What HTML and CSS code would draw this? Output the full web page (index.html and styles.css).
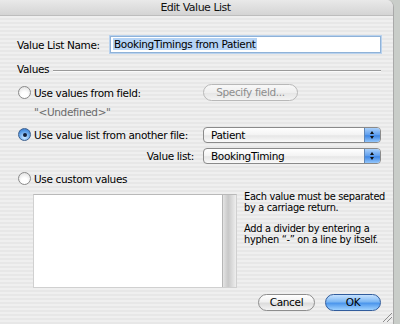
FILE: index.html
```html
<!DOCTYPE html>
<html>
	<head>
		<meta charset="UTF-8">
		<title>Edit Value List</title>
		<link rel="stylesheet" href="styles.css">
	</head>
	<body>
		<div class="window">
			<div class="titlebar">Edit Value List</div>
			<div class="content">
				<div class="row name-row">
					<span class="label">Value List Name:</span>
					<div class="textfield"><span class="sel">BookingTimings from Patient</span></div>
				</div>
				<div class="row group-head">
					<span>Values</span>
					<span class="rule"></span>
				</div>
				<div class="row opt-row first">
					<div class="radio-col">
						<span class="radio"></span>
						<span>Use values from field:</span>
					</div>
					<button class="pill disabled">Specify field...</button>
				</div>
				<div class="row undefined">"&lt;Undefined&gt;"</div>
				<div class="row opt-row second">
					<div class="radio-col">
						<span class="radio on"></span>
						<span>Use value list from another file:</span>
					</div>
					<div class="popup"><span class="pv">Patient</span><span class="arrows"></span></div>
				</div>
				<div class="row opt-row sub">
					<div class="radio-col right">Value list:</div>
					<div class="popup"><span class="pv">BookingTiming</span><span class="arrows"></span></div>
				</div>
				<div class="row opt-row third">
					<div class="radio-col">
						<span class="radio"></span>
						<span>Use custom values</span>
					</div>
				</div>
				<div class="row custom">
					<div class="textarea"><span class="track"></span></div>
					<div class="help">
						<p>Each value must be separated<br>by a carriage return.</p>
						<p>Add a divider by entering a<br>hyphen “-” on a line by itself.</p>
					</div>
				</div>
				<div class="row buttons">
					<button class="pill">Cancel</button>
					<button class="pill default">OK</button>
				</div>
			</div>
			<span class="grip"></span>
		</div>
	</body>
</html>
```

FILE: styles.css
```css
html,body{
	margin: 0;
	padding: 0;
}
body{
	width: 400px;
	height: 324px;
	overflow: hidden;
	background: #c9cdc9;
	font-family: "DejaVu Sans", "Liberation Sans", sans-serif;
	font-size: 10.5px;
	letter-spacing: -0.35px;
	color: #000;
}
p{
	margin: 0;
}
.window{
	position: relative;
	width: 394px;
	height: 330px;
	border-top-right-radius: 7px;
	overflow: hidden;
	background: repeating-linear-gradient(#efefef 0, #efefef 2px, #e7e7e7 2px, #e7e7e7 4px);
	border-right: 1px solid #a9a9a9;
	box-sizing: border-box;
}
.titlebar{
	height: 16px;
	line-height: 15px;
	text-align: center;
	font-size: 11px;
	letter-spacing: -0.5px;
	color: #111;
	background: linear-gradient(#e9e9e9, #d4d4d4);
	border-bottom: 1px solid #bdbdbd;
	box-sizing: border-box;
	padding-right: 2px;
}
.content{
	padding: 0 12px 0 17px;
}
.row{
	display: flex;
	align-items: center;
}
.name-row{
	margin-top: 20px;
	height: 17px;
}
.name-row .label{
	width: 93px;
}
.textfield{
	flex: 1;
	height: 17px;
	box-sizing: border-box;
	background: #fff;
	border: 1px solid #8fb2d8;
	box-shadow: 0 0 0 1px #b9d2ee;
	padding-left: 2px;
	line-height: 15px;
}
.sel{
	background: #b5d3f5;
	padding: 0 1px;
}
.group-head{
	margin-top: 9px;
	height: 14px;
}
.rule{
	flex: 1;
	height: 1px;
	background: #9a9a9a;
	margin: 4px 0 0 4px;
	border-bottom: 1px solid #fafafa;
}
.opt-row{
	height: 17px;
}
.first{
	margin-top: 8px;
}
.second{
	margin-top: 8px;
}
.sub{
	margin-top: 4px;
}
.third{
	margin-top: 7px;
	height: 15px;
}
.radio-col{
	width: 186px;
	display: flex;
	align-items: center;
	gap: 3px;
	white-space: nowrap;
}
.radio-col.right{
	justify-content: flex-end;
	padding-right: 9px;
	box-sizing: border-box;
}
.radio{
	width: 13px;
	height: 13px;
	border-radius: 50%;
	box-sizing: border-box;
	border: 1px solid #8a8a8a;
	background: radial-gradient(circle at 50% 70%, #ffffff 30%, #dadada 100%);
	margin-left: 1px;
	position: relative;
	flex: none;
}
.radio.on{
	border-color: #3b5f8e;
	background: radial-gradient(circle at 50% 75%, #bfe0ff 10%, #5a9de6 60%, #2f6fc4 100%);
}
.radio.on:after{
	content: "";
	position: absolute;
	left: 3.5px;
	top: 3.5px;
	width: 4px;
	height: 4px;
	border-radius: 50%;
	background: #13213a;
}
.undefined{
	margin-top: 5px;
	height: 12px;
	padding-left: 17px;
	color: #6b6b6b;
}
.pill{
	font-family: inherit;
	font-size: 10.5px;
	letter-spacing: -0.35px;
	height: 17px;
	padding: 0;
	border-radius: 9px;
	border: 1px solid #8d8d8d;
	background: linear-gradient(#ffffff, #f0f0f0 45%, #dcdcdc 55%, #f4f4f4);
	color: #000;
	line-height: 15px;
}
.pill.disabled{
	width: 95px;
	color: #8d8d8d;
	border-color: #b8b8b8;
	background: linear-gradient(#f8f8f8, #efefef 50%, #e6e6e6 55%, #f3f3f3);
}
.popup{
	flex: 1;
	height: 16px;
	box-sizing: border-box;
	border: 1px solid #8a8a8a;
	border-radius: 4px;
	background: linear-gradient(#ffffff, #f3f3f3 50%, #e6e6e6 55%, #fafafa);
	display: flex;
	overflow: hidden;
}
.pv{
	flex: 1;
	padding-left: 7px;
	line-height: 14px;
}
.arrows{
	width: 15px;
	position: relative;
	border-left: 1px solid #5f86b5;
	background: linear-gradient(#a9d0fb, #5d9ded 50%, #3d86e5 55%, #93c6fb);
}
.arrows:before,
.arrows:after{
	content: "";
	position: absolute;
	left: 5px;
	border-left: 2.5px solid transparent;
	border-right: 2.5px solid transparent;
}
.arrows:before{
	top: 3px;
	border-bottom: 3px solid #111;
}
.arrows:after{
	top: 8px;
	border-top: 3px solid #111;
}
.custom{
	margin-top: 8px;
	height: 94px;
	align-items: flex-start;
}
.textarea{
	margin-left: 16px;
	width: 204px;
	height: 94px;
	box-sizing: border-box;
	background: #fff;
	border: 1px solid #d0d0d0;
	border-top-color: #b9b9b9;
	display: flex;
	justify-content: flex-end;
	flex: none;
}
.track{
	width: 13px;
	background: linear-gradient(90deg, #e4e4e4, #c8c8c8 40%, #eeeeee);
	border-left: 1px solid #b6b6b6;
}
.help{
	margin-left: 7px;
	margin-top: -3px;
	font-size: 9.8px;
	letter-spacing: -0.3px;
	line-height: 11px;
	white-space: nowrap;
}
.help p{
	margin-bottom: 10px;
}
.buttons{
	margin-top: 6px;
	justify-content: flex-end;
	gap: 10px;
	height: 17px;
}
.buttons .pill{
	width: 57px;
}
.pill.default{
	width: 56px;
	border-color: #315c9c;
	background: linear-gradient(#c6e2ff, #7db7f3 45%, #4c96ec 55%, #9fd2ff);
}
.grip{
	position: absolute;
	right: 1px;
	bottom: 8px;
	width: 9px;
	height: 9px;
	background: linear-gradient(135deg, transparent 45%, #8c8c8c 45%, #8c8c8c 52%, transparent 52%, transparent 70%, #8c8c8c 70%, #8c8c8c 77%, transparent 77%);
}
```
